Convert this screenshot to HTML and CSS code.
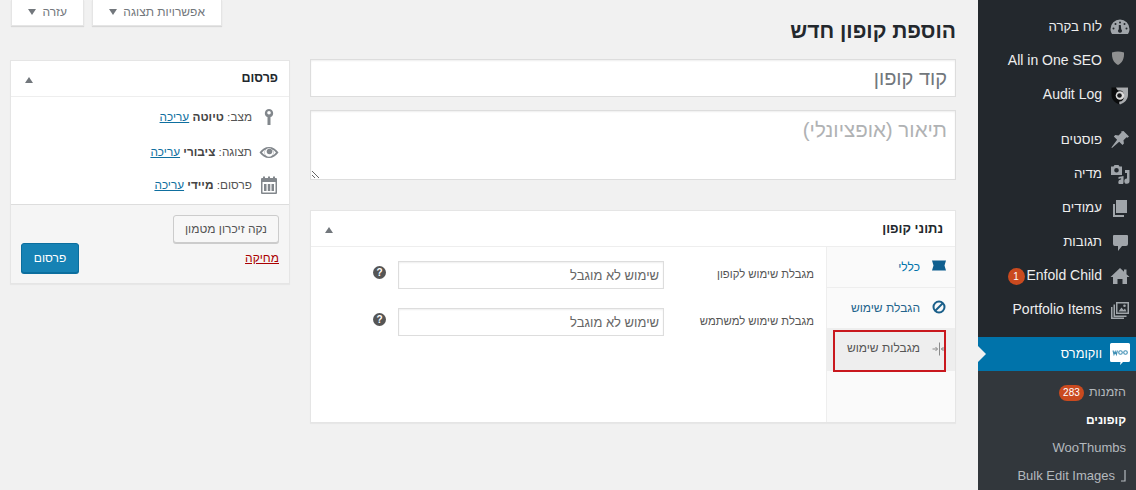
FILE: index.html
```html
<!DOCTYPE html>
<html lang="he" dir="rtl">
<head>
<meta charset="utf-8">
<title>הוספת קופון חדש</title>
<link rel="stylesheet" href="styles.css">
</head>
<body>
<div class="page">
  <nav class="menu">
    <ul class="menu-group">
      <li class="menu-item"><svg class="mi" viewBox="0 0 20 20"><path fill-rule="evenodd" d="M10 2.500a9.500 9.500 0 0 0-9.500 9.500c0 2 .6 3.700 1.600 5h15.800c1-1.300 1.600-3 1.600-5A9.500 9.500 0 0 0 10 2.500zM10 4.500a1 1 0 1 1 0 2 1 1 0 0 1 0-2zM5.500 6a1 1 0 1 1 0 2 1 1 0 0 1 0-2zM14.500 6a1 1 0 1 1 0 2 1 1 0 0 1 0-2zM3.500 10.500a1 1 0 1 1 0 2 1 1 0 0 1 0-2zM16.500 10.500a1 1 0 1 1 0 2 1 1 0 0 1 0-2zM8.800 8l1.200 0 .8 0 .4 4.200a2 2 0 0 1-1.200 3.600 2 2 0 0 1-1.200-3.600z"/></svg><span class="he">לוח בקרה</span></li>
      <li class="menu-item"><svg class="mi" viewBox="0 0 20 20"><path fill="#8f9091" d="M2 1.500c4-1.300 8-1.300 12 0 .3 5.500-1.300 10-6 12.500-4.700-2.500-6.300-7-6-12.500z"/></svg><span>All in One SEO</span></li>
      <li class="menu-item"><svg class="mi" viewBox="0 0 20 20"><path fill="#0b0c0d" d="M1.500 2.500H18V10c0 4.500-3.500 8-8.500 9.500C5 18 1.500 14.500 1.500 10z"/><path fill="#a9acaf" d="M6 2.500h12V10c0 4.500-3.500 8-8 9.500-1-.8-1-1.500-.5-3 3 0 4.500-2 4.500-6s-2.500-5.500-5-5C7.500 5.500 6.500 4 6 2.500z"/><circle cx="10" cy="10.500" r="4.300" fill="#dcdcdc"/><circle cx="9.500" cy="10.500" r="2.300" fill="#17181a"/></svg><span>Audit Log</span></li>
    </ul>
    <ul class="menu-group menu-group-last">
      <li class="menu-item"><svg class="mi" viewBox="0 0 20 20"><path d="M13.500 1l5.500 5.500-1.500 1.200-1-.4-3 3 .4 3.200-1.400 1.500-3.300-3.300L2 18l-.6-.6 5.700-7.600L3.800 6.500l1.500-1.400 3.200.4 3-3-.4-1z"/></svg><span class="he">פוסטים</span></li>
      <li class="menu-item"><svg class="mi" viewBox="0 0 20 20"><path fill-rule="evenodd" d="M1 2.500h2.500l1-1.500h4l1 1.500H12v8.500H1zM6.500 4a2.300 2.300 0 1 0 0 4.600 2.300 2.300 0 0 0 0-4.600z"/><path d="M15 6h4.500v11a2.600 2.600 0 1 1-2.500-2.500V9h-2zM8.500 13l5-1v6a2.600 2.600 0 1 1-2.400-2.500v-1.200L8.500 15z"/></svg><span class="he">מדיה</span></li>
      <li class="menu-item"><svg class="mi" viewBox="0 0 20 20"><path d="M6 2h11v13H6z"/><path d="M3 6h2v11h9v2H3z"/></svg><span class="he">עמודים</span></li>
      <li class="menu-item"><svg class="mi" viewBox="0 0 20 20"><path d="M4 3h13a1 1 0 0 1 1 1v8a2 2 0 0 1-2 2h-4l-4 5v-5H5a2 2 0 0 1-2-2V4a1 1 0 0 1 1-1z"/></svg><span class="he">תגובות</span></li>
      <li class="menu-item"><svg class="mi" viewBox="0 0 20 20"><path d="M10 2l4 3.800V3.500h2.500v4.700L19.500 11H17v7h-4.500v-5h-5v5H3v-7H.5z"/></svg><span>Enfold Child</span><b class="count">1</b></li>
      <li class="menu-item"><svg class="mi" viewBox="0 0 20 20"><path fill-rule="evenodd" d="M6 2h13v12H6zM7.500 3.500v9h10v-9zM8.500 11.500l3-4 2 2.500 1.500-1.500 1.500 3zM14.500 4.500a1.300 1.300 0 1 1 0 2.600 1.300 1.300 0 0 1 0-2.600z"/><path fill-rule="evenodd" d="M3.500 4.500H5V15.500h11.500V17H3.500z"/><path fill-rule="evenodd" d="M1 7h1.500v10.500H14V19H1z"/></svg><span>Portfolio Items</span></li>
    </ul>
    <div class="woo">
      <div class="menu-item menu-current"><svg class="mi" viewBox="0 0 20 24"><path fill="#fff" d="M1.500 1h17A1.500 1.500 0 0 1 20 2.500v16a1.500 1.500 0 0 1-1.500 1.500H13l-3 3 .5-3h-9A1.500 1.500 0 0 1 0 18.500v-16A1.500 1.500 0 0 1 1.500 1z"/><path fill="none" stroke="#3f8fb5" stroke-width="1.100" d="M3 8.500l1 4 1.200-3 1.200 3 1-4"/><circle cx="10.500" cy="10.500" r="1.800" fill="none" stroke="#3f8fb5" stroke-width="1.100"/><circle cx="15.500" cy="10.500" r="1.800" fill="none" stroke="#3f8fb5" stroke-width="1.100"/></svg><span class="he he-small">ווקומרס</span></div>
      <ul class="submenu">
        <li class="sub-item"><span class="he-sub">הזמנות</span><b class="count count-wide">283</b></li>
        <li class="sub-item sub-current">קופונים</li>
        <li class="sub-item">WooThumbs</li>
        <li class="sub-item"><svg class="hook" viewBox="0 0 6 12"><path fill="none" stroke="#b4b9be" stroke-width="1.200" d="M5 0v11H1"/></svg><span>Bulk Edit Images</span></li>
      </ul>
    </div>
  </nav>

  <main class="content">
    <section class="primary">
      <h1 class="title">הוספת קופון חדש</h1>
      <input class="code" type="text" placeholder="קוד קופון">
      <textarea class="desc" placeholder="תיאור (אופציונלי)"></textarea>
      <div class="box data-box">
        <header class="box-head"><h2>נתוני קופון</h2><i class="toggle"></i></header>
        <div class="data-body">
          <ul class="tabs">
            <li class="tab"><svg class="ti" viewBox="0 0 16 16"><path fill="#0f5f8f" d="M1 2.500h14l-1.500 5 1.500 5H1l1.500-5z"/></svg><span>כללי</span></li>
            <li class="tab tab-link"><svg class="ti" viewBox="0 0 16 16"><circle cx="8" cy="8" r="5.500" fill="none" stroke="#1a5f8a" stroke-width="2"/><path stroke="#1a5f8a" stroke-width="2" d="M4 12l8-8"/></svg><span>הגבלת שימוש</span></li>
            <li class="tab tab-active"><svg class="ti" viewBox="0 0 16 16"><path fill="none" stroke="#8a8a8a" stroke-width="1" d="M8.500 1.500v13M1.500 8h5M4.500 6l2 2-2 2M15 8h-5M12.500 6l-2 2 2 2"/></svg><span>מגבלות שימוש</span><i class="marker"></i></li>
          </ul>
          <div class="fields">
            <div class="field"><label>מגבלת שימוש לקופון</label><input type="text" placeholder="שימוש לא מוגבל"><i class="help">?</i></div>
            <div class="field"><label>מגבלת שימוש למשתמש</label><input type="text" placeholder="שימוש לא מוגבל"><i class="help">?</i></div>
          </div>
        </div>
      </div>
    </section>

    <aside class="secondary">
      <div class="screen-links">
        <button class="screen-btn screen-options">אפשרויות תצוגה <i class="down"></i></button>
        <button class="screen-btn screen-help">עזרה <i class="down"></i></button>
      </div>
      <div class="box publish-box">
        <header class="box-head"><h2>פרסום</h2><i class="toggle"></i></header>
        <div class="pub-rows">
          <div class="pub-row"><svg class="pi" viewBox="0 0 20 20"><path fill-rule="evenodd" d="M10 2a4.200 4.200 0 0 1 1.500 8.100V18h-3v-7.900A4.200 4.200 0 0 1 10 2zM10 4a1.800 1.800 0 1 0 0 3.600A1.800 1.800 0 0 0 10 4z"/></svg><span>מצב: <b>טיוטה</b> <a href="#">עריכה</a></span></div>
          <div class="pub-row pub-row-mid"><svg class="pi" viewBox="0 0 20 20"><path fill-rule="evenodd" d="M.5 10.500C3 7 6 5 10 5s7 2 9.500 5.500C17 14 14 16 10 16s-7-2-9.500-5.500zM10 6.200a4.300 4.300 0 1 0 0 8.600 4.300 4.300 0 0 0 0-8.600zM3 10.500c1 1.300 2.200 2.400 3.600 3.100a5 5 0 0 1 0-6.200C5.200 8.100 4 9.200 3 10.500zM17 10.500c-1-1.300-2.200-2.400-3.600-3.100a5 5 0 0 1 0 6.200c1.400-.7 2.600-1.800 3.600-3.100z"/><circle cx="10.500" cy="9.500" r="2.800"/></svg><span>תצוגה: <b>ציבורי</b> <a href="#">עריכה</a></span></div>
          <div class="pub-row"><svg class="pi" viewBox="0 0 20 20"><path fill-rule="evenodd" d="M3 3h1V1.500h2V3h3V1.500h2V3h3V1.500h2V3h1a1 1 0 0 1 1 1v14a1 1 0 0 1-1 1H3a1 1 0 0 1-1-1V4a1 1 0 0 1 1-1zM3.500 7v10.500h13V7zM5 9h2.500v7H5zM8.800 9h2.500v7H8.800zM12.500 9H15v7h-2.500z"/></svg><span>פרסום: <b>מיידי</b> <a href="#">עריכה</a></span></div>
        </div>
        <div class="pub-foot">
          <button class="btn-cache">נקה זיכרון מטמון</button>
          <div class="pub-actions">
            <a class="del" href="#">מחיקה</a>
            <button class="btn-pub">פרסום</button>
          </div>
        </div>
      </div>
    </aside>
  </main>
</div>
</body>
</html>
```
FILE: styles.css
```css
* { box-sizing: border-box; }
html, body { margin: 0; height: 490px; overflow: hidden; }
body { background: #f1f1f1; color: #444; font: 13px/1.4 "Liberation Sans", Arial, sans-serif; }
ul { list-style: none; margin: 0; padding: 0; }
.page { display: flex; height: 490px; }

.menu { width: 158px; height: 490px; flex: none; display: flex; flex-direction: column; background: #23282d; padding-top: 10px; color: #eee; font-size: 14px; }
.menu-group { margin-bottom: 11px; }
.menu-group-last { margin-bottom: 10px; }
.menu-item { display: flex; align-items: center; height: 34px; padding-right: 6px; gap: 8px; }
.mi { width: 20px; height: 20px; flex: none; fill: #a0a5aa; }
.he { font-size: 13.300px; }
.he-small { font-size: 12.800px; }
.count { display: inline-block; background: #ca4a1f; color: #fff; font: 400 10px/17px "Liberation Sans", sans-serif; height: 17px; min-width: 17px; border-radius: 9px; text-align: center; margin-right: -6px; }
.woo { flex: 1; min-height: 0; background: #32373c; }
.menu-current { background: #0073aa; color: #fff; position: relative; }
.menu-current .mi { height: 24px; }
.menu-current::after { content: ""; position: absolute; left: 0; top: 9px; border: 8px solid transparent; border-left-color: #f1f1f1; border-right-width: 0; }
.submenu { padding-top: 8px; font-size: 13px; color: #b4b9be; }
.sub-item { display: flex; align-items: center; gap: 5px; height: 27.700px; padding-right: 10px; }
.he-sub { font-size: 12.500px; }
.sub-current { color: #fff; font-weight: 700; font-size: 12px; }
.hook { width: 6px; height: 12px; flex: none; }
.count-wide { margin: 0; width: 25px; height: 16px; line-height: 16px; min-width: 0; }

.content { flex: 1; display: flex; gap: 20px; padding: 0 22px 0 10px; min-width: 0; }
.primary { flex: 1; min-width: 0; display: flex; flex-direction: column; align-items: stretch; }
.secondary { width: 280px; flex: none; }

.title { margin: 0; height: 59px; padding-top: 17px; font-size: 21px; line-height: 28px; font-weight: 700; color: #23282d; }
.code, .desc { display: block; width: 100%; background: #fff; border: 1px solid #ddd; box-shadow: inset 0 1px 2px rgba(0,0,0,.07); font: 20px/1.300 "Liberation Sans", sans-serif; padding: 3px 8px; outline: 0; }
.code { height: 38px; margin-bottom: 13px; }
.code::placeholder { color: #72777c; opacity: 1; }
.desc { height: 70px; margin-bottom: 30px; padding-top: 6px; font-size: 20.500px; }
.desc::placeholder { color: #b0b2b4; opacity: 1; }

.box { background: #fff; border: 1px solid #e5e5e5; box-shadow: 0 1px 1px rgba(0,0,0,.04); }
.box-head { display: flex; align-items: center; justify-content: space-between; height: 36px; padding: 0 12px 0 14px; border-bottom: 1px solid #eee; }
.box-head h2 { margin: 0; font-size: 13px; line-height: 1; font-weight: 700; color: #23282d; }
.toggle { width: 0; height: 0; border: 4px solid transparent; border-top: 0; border-bottom: 6px solid #72777c; margin-top: 2px; }

.data-box { height: 213px; }
.data-body { display: flex; height: 175px; }
.tabs { width: 129px; flex: none; background: #fafafa; border-left: 1px solid #eee; }
.tab { display: flex; align-items: center; gap: 11px; height: 41px; padding-right: 8px; border-bottom: 1px solid #eee; color: #0073aa; font-size: 12px; position: relative; }
.tab .ti { margin-top: -3px; }
.tab-link { color: #23648c; }
.tab-active { background: #eee; color: #555; border-bottom: 0; height: 42px; padding-bottom: 3px; }
.tab-active .ti { margin-top: 0; }
.marker { position: absolute; top: 1px; right: 9px; width: 113px; height: 42px; border: 2px solid #c9181e; }
.ti { width: 16px; height: 16px; flex: none; }
.fields { flex: 1; padding: 14px 12px 0 0; }
.field { display: flex; align-items: flex-start; height: 47px; font-size: 11.300px; color: #555; }
.field label { width: 150px; flex: none; padding-top: 6px; }
.field input { width: 266px; height: 28px; border: 1px solid #ddd; background: #fff; box-shadow: inset 0 1px 2px rgba(0,0,0,.07); font: 13px "Liberation Sans", sans-serif; padding: 3px 4px; outline: 0; }
.field input::placeholder { color: #666; opacity: 1; }
.help { width: 13px; height: 13px; border-radius: 50%; background: #555; color: #fff; font: 700 10px/13px "Liberation Sans", sans-serif; text-align: center; margin: 5px 12px 0 0; }

.screen-links { display: flex; justify-content: flex-end; gap: 8px; height: 26px; margin-bottom: 34px; padding-left: 1px; }
.screen-btn { height: 26px; margin: 0; padding: 0 0 2px; background: #fff; border: 1px solid #e5e5e5; border-top: 0; box-shadow: 0 1px 1px rgba(0,0,0,.1); font: 12px "Liberation Sans", sans-serif; color: #72777c; }
.screen-options { width: 130px; }
.screen-help { width: 73px; }
.down { display: inline-block; width: 0; height: 0; border: 4px solid transparent; border-bottom: 0; border-top: 6px solid #72777c; margin-right: 3px; vertical-align: 1px; }

.publish-box { height: 224px; display: flex; flex-direction: column; }
.publish-box h2 { font-size: 12.500px; margin-right: -1px; }
.pub-rows { flex: 1; padding-top: 3px; }
.pub-row { display: flex; align-items: center; height: 34px; padding-right: 10px; gap: 7px; color: #555; font-size: 11.800px; }
.pub-row-mid { padding-top: 2px; }
.pub-row b { color: #444; }
.pub-row a { color: #0f6f9f; }
.pi { width: 20px; height: 20px; fill: #82878c; flex: none; }
.pub-foot { height: 79px; flex: none; background: #f5f5f5; border-top: 1px solid #ddd; padding: 10px 10px 0 10px; }
.btn-cache { display: block; width: 106px; height: 28px; margin: 0; padding: 0; background: #f7f7f7; border: 1px solid #ccc; border-radius: 3px; box-shadow: 0 1px 0 #ccc; font: 12px "Liberation Sans", sans-serif; color: #555; }
.pub-actions { display: flex; justify-content: space-between; align-items: center; }
.del { color: #a00; font-size: 12px; }
.btn-pub { width: 58px; height: 30px; padding: 0; background: #1682b4; border: 1px solid #0b6e9e; border-radius: 3px; box-shadow: 0 1px 0 #0b6e9e; color: #fff; font: 12px "Liberation Sans", sans-serif; }
```
